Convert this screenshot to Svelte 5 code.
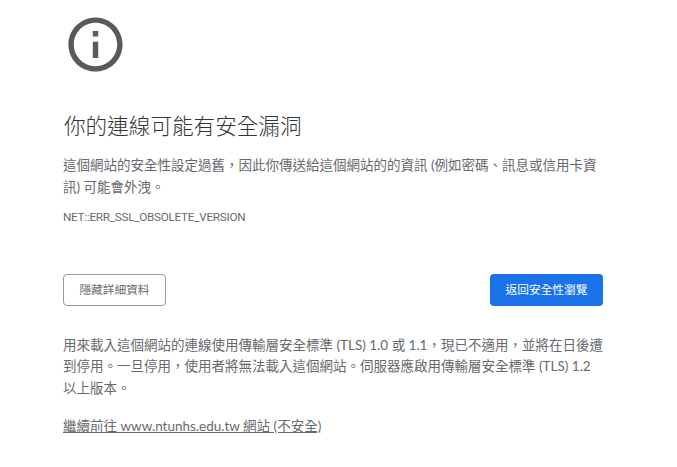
<script>
  const host = 'www.ntunhs.edu.tw';
</script>

<div class="page">
  <main>
    <svg class="icon" viewBox="0 0 24 24" aria-hidden="true">
      <path d="M11 7h2v2h-2zm0 4h2v6h-2zm1-9C6.48 2 2 6.48 2 12s4.48 10 10 10 10-4.48 10-10S17.52 2 12 2zm0 18c-4.41 0-8-3.59-8-8s3.59-8 8-8 8 3.59 8 8-3.59 8-8 8z" />
    </svg>

    <h1>你的連線可能有安全漏洞</h1>
    <p class="desc">這個網站的安全性設定過舊，因此你傳送給這個網站的的資訊 (例如密碼、訊息或信用卡資訊) 可能會外洩。</p>
    <p class="code">NET::ERR_SSL_OBSOLETE_VERSION</p>

    <div class="buttons">
      <button class="secondary">隱藏詳細資料</button>
      <button class="primary">返回安全性瀏覽</button>
    </div>

    <p class="details">用來載入這個網站的連線使用傳輸層安全標準 (TLS) 1.0 或 1.1，現已不適用，並將在日後遭到停用。一旦停用，使用者將無法載入這個網站。伺服器應啟用傳輸層安全標準 (TLS) 1.2 以上版本。</p>
    <p class="proceed"><a href="#proceed">繼續前往 {host} 網站 (不安全)</a></p>
  </main>
</div>

<style>
  :global(body) {
    margin: 0;
    background: #fff;
  }

  .page {
    padding: 12px 74px 0 63px;
    font-family: "Lato", "Noto Sans CJK TC", sans-serif;
    font-size: 13.5px;
    line-height: 21.6px;
    color: #666a6e;
  }

  main {
    width: 540px;
  }

  .icon {
    display: block;
    width: 65px;
    height: 65px;
    fill: #5a5a5a;
  }

  h1 {
    margin: 36px 0 0 1px;
    font-size: 21.6px;
    font-weight: 300;
    line-height: 27px;
    color: #333538;
  }

  p {
    margin: 0;
  }

  .desc {
    margin-top: 15px;
  }

  .code {
    margin-top: 9px;
    font-family: "Roboto", sans-serif;
    font-size: 11.7px;
    letter-spacing: -0.25px;
  }

  .buttons {
    display: flex;
    justify-content: space-between;
    margin-top: 45px;
  }

  button {
    height: 32px;
    padding: 0 14px;
    border-radius: 4px;
    font-family: inherit;
    font-size: 11.7px;
    line-height: 1;
  }

  .secondary {
    width: 103px;
    border: 1px solid #9a9a9a;
    background: #fff;
    color: #666a6e;
  }

  .primary {
    width: 113px;
    border: 0;
    background: #1a73e8;
    color: #fff;
  }

  .details {
    margin-top: 29px;
  }

  .proceed {
    margin-top: 16px;
  }

  a {
    color: #666a6e;
    text-decoration: underline;
  }
</style>
